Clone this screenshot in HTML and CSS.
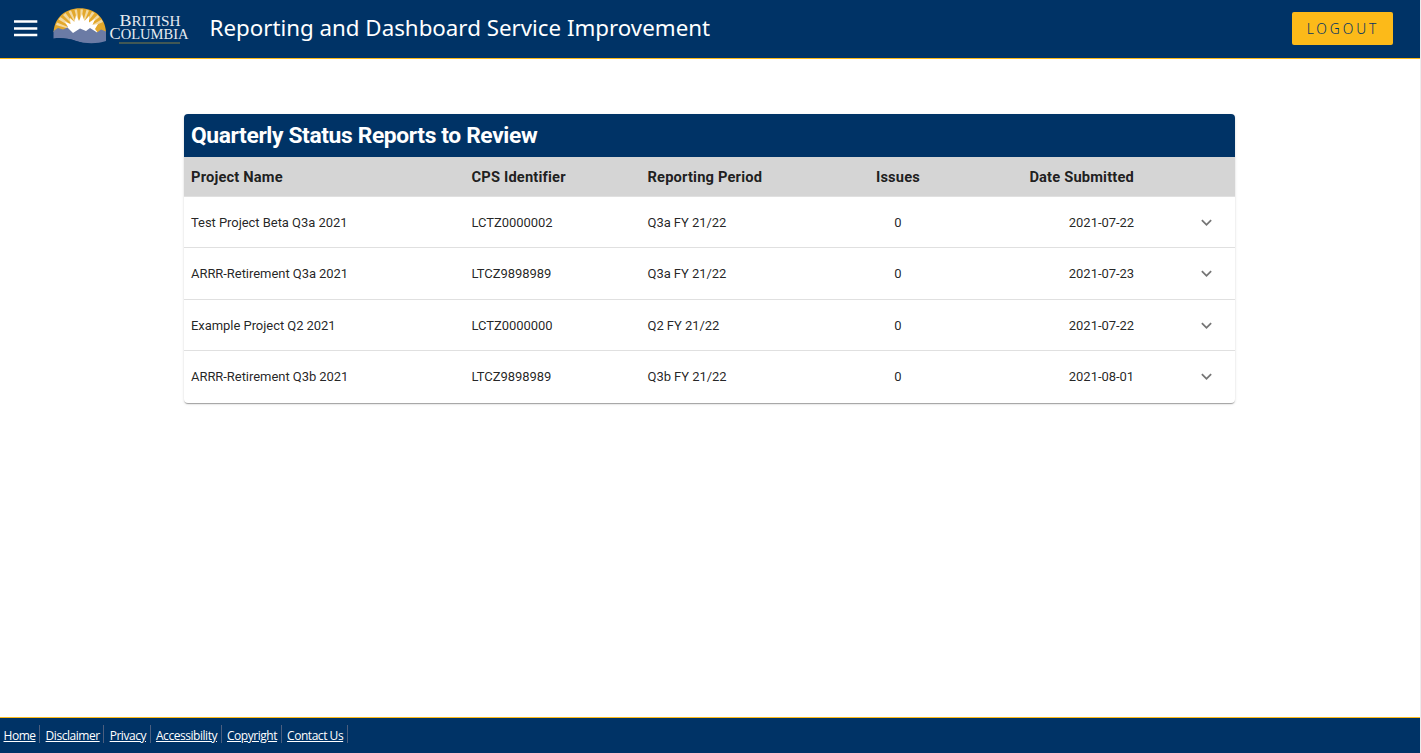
FILE: index.html
```html
<!DOCTYPE html>
<html lang="en">
<head>
<meta charset="utf-8">
<title>Reporting and Dashboard Service Improvement</title>
<link rel="stylesheet" href="styles.css">
</head>
<body>
<div class="page">
  <header class="header">
    <svg class="menu" width="24" height="18" viewBox="0 0 24 18"><path d="M0 2.500h23.300M0 9.500h23.300M0 16h23.300" stroke="#fff" stroke-width="2.400"/></svg>
    <svg class="logo" width="138" height="40" viewBox="52 6 138 40">
      <path d="M53.500 32C54.500 18 65 8.300 80 8.300C95 8.300 105 18 106 32Z" fill="#e3a82b"/>
      <path d="M80 32L56 25L57 22.500ZM80 32L58.500 19.500L60.500 17ZM80 32L63 15L65.500 13ZM80 32L68.500 11.500L71 10.500ZM80 32L74.500 9.800L77 9.400ZM80 32L80.500 9.200L83 9.400ZM80 32L86.500 9.800L89 10.500ZM80 32L92 11.700L94.500 13ZM80 32L97.500 15L99.500 17ZM80 32L101.500 19.500L103 22Z" fill="#fff" opacity=".55"/>
      <path d="M64 33L68 27L65 22L70.500 24L70 18L74.500 22L76 15L79 21L82 14L84.500 21L89 16L89 22.500L95 19L92.500 25L98 24L95 29L98 33Z" fill="#fff"/>
      <path d="M53.500 45V31L58 28L63 29.500L67.500 27.500L73 33L80 28.500L86 31L90 28L97 32.500L101 29.500L106 31.500V41C97 44 86 44 76 41C67 38 61 38 53.500 40Z" fill="#6b7ba5"/>
      <path d="M53 38.500C61 37.500 67 38 76 41L82 42.800V46H53Z" fill="#036"/>
      <g class="logo-text" fill="#e6ebf1">
        <text x="119.500" y="26" textLength="61" lengthAdjust="spacingAndGlyphs"><tspan font-size="17">B</tspan><tspan font-size="14.500">RITISH</tspan></text>
        <text x="109.500" y="39" textLength="79" lengthAdjust="spacingAndGlyphs"><tspan font-size="17">C</tspan><tspan font-size="14.800">OLUMBIA</tspan></text>
      </g>
      <path d="M119 43h61" stroke="#58664f" stroke-width="1.600"/>
    </svg>
    <h1 class="brand">Reporting and Dashboard Service Improvement</h1>
    <button class="logout">LOGOUT</button>
  </header>
  <main class="main">
    <section class="card">
      <h2 class="card-title">Quarterly Status Reports to Review</h2>
      <div class="row head"><span>Project Name</span><span>CPS Identifier</span><span>Reporting Period</span><span class="center">Issues</span><span class="right">Date Submitted</span><span></span></div>
      <div class="row"><span>Test Project Beta Q3a 2021</span><span>LCTZ0000002</span><span>Q3a FY 21/22</span><span class="center">0</span><span class="right">2021-07-22</span><svg class="chevron" viewBox="0 0 24 24"><path d="M7.410 8.590L12 13.170l4.590-4.580L18 10l-6 6-6-6z"/></svg></div>
      <div class="row"><span>ARRR-Retirement Q3a 2021</span><span>LTCZ9898989</span><span>Q3a FY 21/22</span><span class="center">0</span><span class="right">2021-07-23</span><svg class="chevron" viewBox="0 0 24 24"><path d="M7.410 8.590L12 13.170l4.590-4.580L18 10l-6 6-6-6z"/></svg></div>
      <div class="row"><span>Example Project Q2 2021</span><span>LCTZ0000000</span><span>Q2 FY 21/22</span><span class="center">0</span><span class="right">2021-07-22</span><svg class="chevron" viewBox="0 0 24 24"><path d="M7.410 8.590L12 13.170l4.590-4.580L18 10l-6 6-6-6z"/></svg></div>
      <div class="row"><span>ARRR-Retirement Q3b 2021</span><span>LTCZ9898989</span><span>Q3b FY 21/22</span><span class="center">0</span><span class="right">2021-08-01</span><svg class="chevron" viewBox="0 0 24 24"><path d="M7.410 8.590L12 13.170l4.590-4.580L18 10l-6 6-6-6z"/></svg></div>
    </section>
  </main>
  <footer class="footer"><a href="#">Home</a><a href="#">Disclaimer</a><a href="#">Privacy</a><a href="#">Accessibility</a><a href="#">Copyright</a><a href="#">Contact Us</a></footer>
</div>
</body>
</html>
```
FILE: styles.css
```css
* { box-sizing: border-box; }
body { margin: 0; background: #fff; font-family: Roboto, sans-serif; }
.page { display: flex; flex-direction: column; height: 753px; border-right: 1px solid #ededed; }
.header { display: flex; align-items: center; height: 59px; padding: 0 27px 0 14px; background: #036; border-bottom: 1px solid #fcba19; }
.menu { margin-bottom: 2px; }
.logo { margin: 0 0 6px 14px; overflow: visible; }
.logo-text { font-family: "Liberation Serif", serif; }
.brand { margin: 0 auto 2px 19.500px; color: #fff; font: 400 22.320px/30px "Noto Sans", sans-serif; white-space: nowrap; }
.logout { width: 101px; height: 33px; margin-bottom: 2px; padding: 0 0 0 1px; border: 0; border-radius: 2px; background: #fcba19; color: #036; font: 300 13.800px/33px "Noto Sans", sans-serif; letter-spacing: 2.900px; }
.main { flex: 1; padding: 55px 185px 0 184px; }
.card { height: 289px; background: #fff; border-radius: 4px; overflow: hidden; box-shadow: 0 2px 1px -1px rgba(0,0,0,.2), 0 1px 1px rgba(0,0,0,.14), 0 1px 3px rgba(0,0,0,.12); }
.card-title { height: 43px; margin: 0; padding-left: 7px; background: #036; color: #fff; font-size: 22.800px; line-height: 43px; font-weight: 700; letter-spacing: -.37px; }
.row { display: grid; grid-template-columns: 280.500px 176px 220px 61px 205.500px 1fr; align-items: center; height: 51.400px; padding: .6px 0 0 7px; border-bottom: 1px solid #e0e0e0; color: rgba(0,0,0,.87); font-size: 13px; letter-spacing: -.05px; }
.head { height: 40px; padding-top: 1px; background: #d5d5d5; font-size: 14.700px; font-weight: 700; letter-spacing: .17px; }
.row:last-child { border-bottom: 0; padding-bottom: 1px; }
.center { text-align: center; }
.right { text-align: right; }
.chevron { width: 21px; height: 21px; margin-left: 62px; fill: #757575; }
.footer { display: flex; align-items: flex-start; height: 36px; padding: 7px 0 0 3.500px; background: #036; border-top: 1px solid #fcba19; font: 12px/22px "Open Sans", sans-serif; letter-spacing: -.46px; }
.footer a { height: 18px; color: #fff; padding-right: 3.800px; margin-right: 5.200px; border-right: 1px solid #4b5e7e; }
```
